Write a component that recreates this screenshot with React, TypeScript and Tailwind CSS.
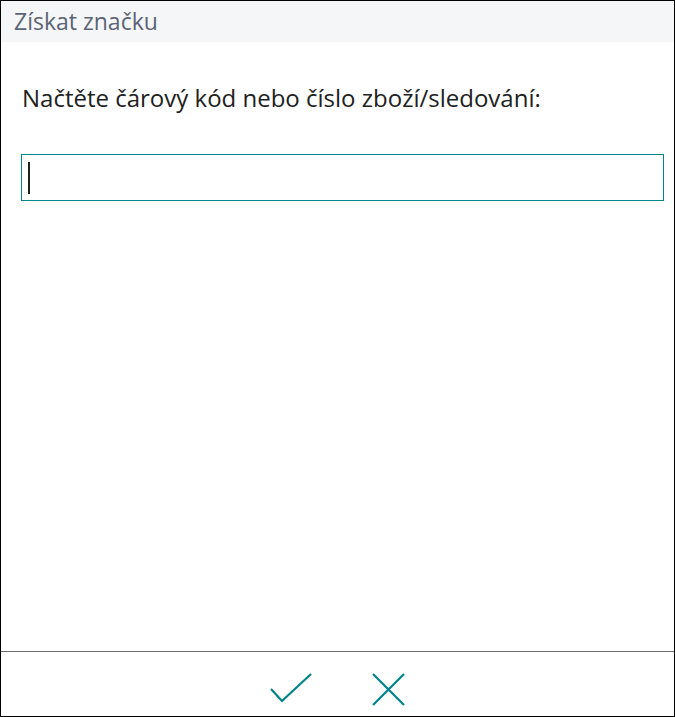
import React from "react";

export default function App() {
  return (
    <div className="w-[675px] h-[717px] border border-black bg-white flex flex-col font-['Open_Sans',sans-serif]">
      {/* header */}
      <div className="h-[41px] bg-[#f5f6f8] pl-[13px] flex items-center">
        <span className="text-[23px] text-[#5b6474] leading-none">Získat značku</span>
      </div>

      {/* body */}
      <div className="flex-1 pl-[20px] pr-[10px]">
        <p className="mt-[41px] text-[24px] text-[#212121] leading-[30px] pl-[1px]">
          Načtěte čárový kód nebo číslo zboží/sledování:
        </p>
        <div className="mt-[41px] h-[47px] border border-[#00868b] flex items-center pl-[6px]">
          <div className="w-[2px] h-[32px] bg-[#212121]" />
        </div>
      </div>

      {/* footer */}
      <div className="h-[65px] border-t border-[#6e6e6e] flex items-start justify-center gap-[60px] pt-[21px]">
        <svg width="42" height="31" viewBox="0 0 42 31">
          <path d="M1 16 L12 28 L41 1" fill="none" stroke="#008489" strokeWidth="2.2" />
        </svg>
        <svg width="33" height="33" viewBox="0 0 33 33">
          <path d="M1 1 L32 32 M32 1 L1 32" fill="none" stroke="#008489" strokeWidth="2.2" />
        </svg>
      </div>
    </div>
  );
}
